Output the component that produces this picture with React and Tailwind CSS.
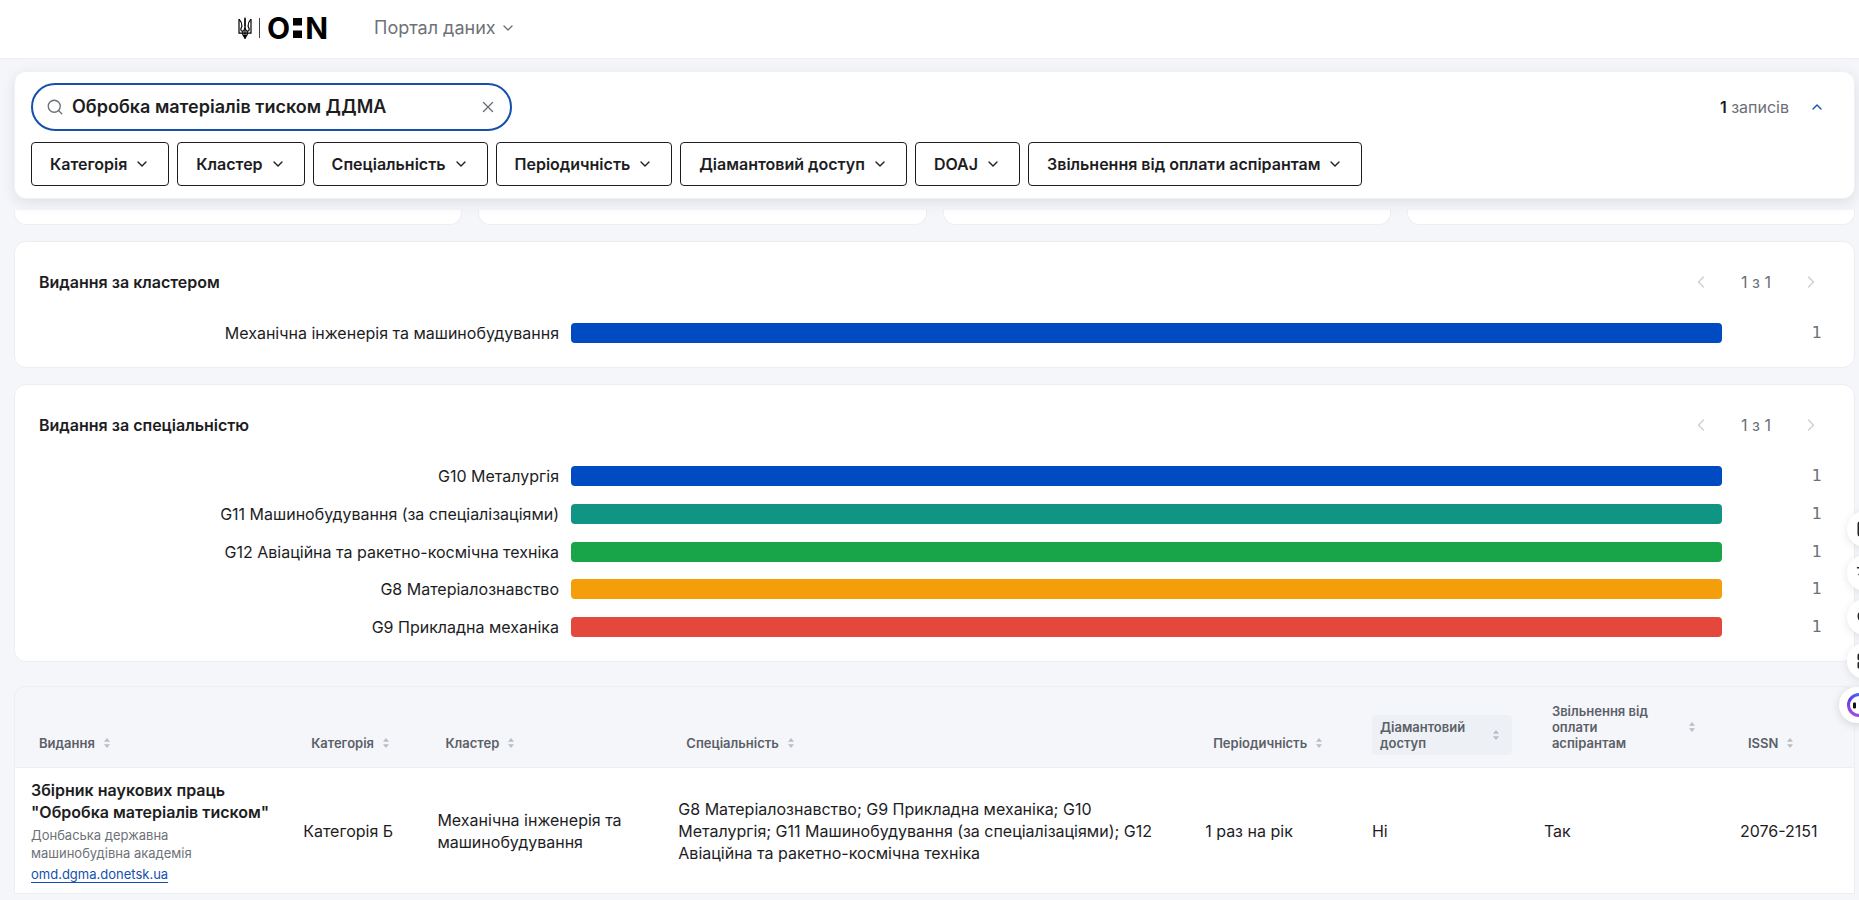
import React, { useState } from "react";
import {
  ChevronDown,
  ChevronLeft,
  ChevronRight,
  ChevronUp,
  Languages,
  LayoutGrid,
  Search,
  Square,
  X,
} from "lucide-react";

const filters = [
  "Категорія",
  "Кластер",
  "Спеціальність",
  "Періодичність",
  "Діамантовий доступ",
  "DOAJ",
  "Звільнення від оплати аспірантам",
];

const clusters = [
  { label: "Механічна інженерія та машинобудування", color: "bg-[#004bc1]", value: 1 },
];

const specialties = [
  { label: "G10 Металургія", color: "bg-[#004bc1]", value: 1 },
  { label: "G11 Машинобудування (за спеціалізаціями)", color: "bg-[#109484]", value: 1 },
  { label: "G12 Авіаційна та ракетно-космічна техніка", color: "bg-[#18a54a]", value: 1 },
  { label: "G8 Матеріалознавство", color: "bg-[#f59e0b]", value: 1 },
  { label: "G9 Прикладна механіка", color: "bg-[#e4483d]", value: 1 },
];

const columns = [
  { lines: ["Видання"], width: "w-[14.8%]" },
  { lines: ["Категорія"], width: "w-[7.3%]" },
  { lines: ["Кластер"], width: "w-[13.1%]" },
  { lines: ["Спеціальність"], width: "w-[28.65%]" },
  { lines: ["Періодичність"], width: "w-[9.07%]" },
  { lines: ["Діамантовий", "доступ"], width: "w-[9.35%]", wide: true, active: true },
  { lines: ["Звільнення від", "оплати", "аспірантам"], width: "w-[10.66%]", wide: true },
  { lines: ["ISSN"], width: "w-[7.07%]" },
];

function Trident() {
  return (
    <svg viewBox="0 0 14 22" className="h-[22px] w-[14px]" fill="none" stroke="#000" strokeWidth="1.2" aria-hidden="true">
      <path d="M1 2.2v14h3.500M13 2.200v14H9.500" />
      <path d="M1 2.200c2 2.100 3 4.300 2.900 6.800-.1 1.500-1 2.100-1.100 3.400 0 1.200.8 1.800 1.900 1.800 1.900-.3 2.100-2.700 2.300-5.200V1.500M13 2.200c-2 2.100-3 4.300-2.900 6.800.1 1.500 1 2.100 1.100 3.400 0 1.200-.8 1.800-1.900 1.800-1.900-.3-2.100-2.700-2.300-5.200" />
      <path d="M7 .5v8.500M4.700 14.200v2.600c0 1.400.9 2.200 2.300 2.200s2.300-.8 2.300-2.200v-2.600M7 12v9M4.500 16.200h5" />
      <path d="M5.800 18.800h2.400L7 21.500z" fill="#000" />
    </svg>
  );
}

function Logo() {
  return (
    <a href="#" aria-label="ОН" className="flex items-center text-black">
      <Trident />
      <span className="mx-[7px] h-5 w-px bg-[#444444]" />
      <span className="flex items-center gap-[3px] text-[30px] leading-[30px] font-bold">
        <span>O</span>
        <svg viewBox="0 0 9 22" className="h-[22px] w-[9px]" aria-hidden="true">
          <rect y="1" width="9" height="7.500" />
          <rect y="13.500" width="9" height="7.500" />
        </svg>
        <span>N</span>
      </span>
    </a>
  );
}

function SortIcon() {
  return (
    <svg viewBox="0 0 16 16" className="size-4 shrink-0" fill="#b9bdc5" aria-hidden="true">
      <path d="M8 3l3 3.800H5zM8 13l3-3.800H5z" />
    </svg>
  );
}

function Pager() {
  return (
    <div className="flex items-center text-base text-[#6b7078]">
      <button type="button" aria-label="Попередня" disabled className="flex size-8 items-center justify-center">
        <ChevronLeft className="size-5 text-[#cdd0d5]" strokeWidth={1.8} />
      </button>
      <span className="w-[78px] text-center">1 з 1</span>
      <button type="button" aria-label="Наступна" disabled className="flex size-8 items-center justify-center">
        <ChevronRight className="size-5 text-[#cdd0d5]" strokeWidth={1.8} />
      </button>
    </div>
  );
}

function ChartCard({ title, rows, chartHeight }) {
  return (
    <section className="rounded-xl border border-[#eceef2] bg-white p-6">
      <div className="flex items-center justify-between pr-[3px]">
        <h2 className="text-base leading-8 font-semibold">{title}</h2>
        <Pager />
      </div>
      <ul className={`mt-[25px] flex flex-col justify-between pr-2 ${chartHeight}`}>
        {rows.map((row) => (
          <li key={row.label} className="flex h-5 items-center gap-3">
            <span className="w-[520px] shrink-0 text-right leading-5">{row.label}</span>
            <span className={`h-5 flex-1 rounded-[4px] ${row.color}`} />
            <span className="w-[88px] shrink-0 text-right font-['DejaVu_Sans',sans-serif] leading-5 text-[#6b7078]">
              {row.value}
            </span>
          </li>
        ))}
      </ul>
    </section>
  );
}

function FloatingTools() {
  const round =
    "-mr-6 flex size-9 items-center rounded-full bg-white pl-[9px] text-[#222222] shadow-[0_2px_10px_rgba(0,0,0,0.1)]";
  return (
    <aside className="fixed top-[511px] right-0 flex flex-col items-end gap-2">
      <button type="button" aria-label="Копіювати" className={round}>
        <Square className="size-[18px] shrink-0" />
      </button>
      <button type="button" aria-label="Перекласти" className={round}>
        <Languages className="size-[18px] shrink-0" />
      </button>
      <button type="button" aria-label="Пошук" className={round}>
        <Search className="size-[18px] shrink-0" />
      </button>
      <button type="button" aria-label="Застосунки" className={round}>
        <LayoutGrid className="size-[18px] shrink-0" fill="currentColor" />
      </button>
      <button
        type="button"
        aria-label="Помічник"
        className="-mr-4 flex size-9 items-center rounded-full bg-white pl-2 shadow-[0_2px_10px_rgba(0,0,0,0.14)]"
      >
        <svg viewBox="0 0 24 24" className="size-6 shrink-0" fill="none" aria-hidden="true">
          <defs>
            <linearGradient id="ring" x1="0" y1="1" x2="0.5" y2="0">
              <stop offset="0" stopColor="#b44ee0" />
              <stop offset="0.6" stopColor="#5b3fe0" />
              <stop offset="1" stopColor="#4a63f0" />
            </linearGradient>
          </defs>
          <circle cx="12" cy="12" r="10.500" stroke="url(#ring)" strokeWidth="3" />
          <rect x="6" y="9.500" width="3" height="6" rx="1" fill="#111" />
          <rect x="14" y="9.500" width="3" height="6" rx="1" fill="#111" />
        </svg>
      </button>
    </aside>
  );
}

export default function App() {
  const [query, setQuery] = useState("Обробка матеріалів тиском ДДМА");

  return (
    <div className="min-h-screen bg-[#f5f6fa] font-['Inter','Liberation_Sans',sans-serif] text-base text-[#1d1d1f]">
      <header className="flex h-[59px] items-center gap-[46px] border-b border-[#eceef2] bg-white pb-[2px] pl-[238px]">
        <Logo />
        <button type="button" className="flex items-center gap-1 text-lg text-[#6e7278]">
          Портал даних
          <ChevronDown className="size-4" />
        </button>
      </header>

      <main className="pt-3 pr-1 pl-[14px]">
        <section className="relative rounded-xl border border-[#f0f1f4] bg-white px-4 pt-[11px] pb-3 shadow-[0_4px_14px_rgba(30,40,70,0.1)]">
          <div className="flex items-center justify-between">
            <div
              role="search"
              className="flex h-12 w-[481px] items-center gap-2 rounded-full border-2 border-[#1550ae] px-[13px]"
            >
              <Search className="size-[18px] shrink-0 text-[#6b7078]" strokeWidth={1.8} />
              <input
                type="text"
                aria-label="Пошук"
                value={query}
                onChange={(e) => setQuery(e.target.value)}
                className="min-w-0 flex-1 bg-transparent text-lg font-semibold outline-none"
              />
              <button type="button" aria-label="Очистити" onClick={() => setQuery("")}>
                <X className="size-[18px] text-[#6b7078]" strokeWidth={1.8} />
              </button>
            </div>
            <div className="flex items-center gap-5 pr-[13px] text-[#6b7078]">
              <p>
                <b className="font-semibold text-[#1d1d1f]">1</b> записів
              </p>
              <button type="button" aria-label="Згорнути" className="text-[#1550ae]">
                <ChevronUp className="size-4" />
              </button>
            </div>
          </div>
          <div className="mt-[11px] flex flex-wrap gap-2">
            {filters.map((name) => (
              <button
                key={name}
                type="button"
                className="flex h-11 items-center gap-[7px] rounded-[4px] border border-[#1d1d1f] px-[18px] font-semibold"
              >
                {name}
                <ChevronDown className="size-4" />
              </button>
            ))}
          </div>
        </section>

        <div className="mt-[11px] grid grid-cols-4 gap-4">
          {[0, 1, 2, 3].map((n) => (
            <div key={n} className="h-[15px] rounded-b-xl border border-t-0 border-[#eceef2] bg-white" />
          ))}
        </div>

        <div className="mt-4 flex flex-col gap-4">
          <ChartCard title="Видання за кластером" rows={clusters} chartHeight="h-5" />
          <ChartCard title="Видання за спеціальністю" rows={specialties} chartHeight="h-[171px]" />
        </div>

        <div className="mt-6 overflow-hidden rounded-t-xl border border-b-0 border-[#eceef2]">
          <table className="w-full table-fixed text-left">
            <thead>
              <tr className="h-20 border-b border-[#eceef2] align-bottom">
                {columns.map((col) => (
                  <th key={col.lines[0]} className={`px-4 py-3 ${col.width}`}>
                    <button
                      type="button"
                      className={`flex items-center gap-1 rounded-[4px] px-2 py-1 text-left text-[13px] leading-4 font-semibold text-[#5b6068] ${col.wide ? "w-full justify-between" : ""} ${col.active ? "bg-[#edf0f5]" : ""}`}
                    >
                      <span>
                        {col.lines.map((line) => (
                          <span key={line} className="block whitespace-nowrap">
                            {line}
                          </span>
                        ))}
                      </span>
                      <SortIcon />
                    </button>
                  </th>
                ))}
              </tr>
            </thead>
            <tbody className="bg-white">
              <tr className="border-b border-[#eceef2] leading-[22px]">
                <td className="px-4 pt-[11px] pb-[10px]">
                  <strong className="block font-semibold whitespace-nowrap">
                    Збірник наукових праць
                    <br />
                    "Обробка матеріалів тиском"
                  </strong>
                  <span className="mt-[3px] block text-[13px] leading-[18px] text-[#6e7278]">
                    Донбаська державна
                    <br />
                    машинобудівна академія
                  </span>
                  <a
                    href="https://omd.dgma.donetsk.ua"
                    className="mt-[3px] block text-[13px] leading-[18px] text-[#1550ae] underline underline-offset-3"
                  >
                    omd.dgma.donetsk.ua
                  </a>
                </td>
                <td className="px-4 whitespace-nowrap">Категорія Б</td>
                <td className="px-4">Механічна інженерія та машинобудування</td>
                <td className="px-4">
                  G8 Матеріалознавство; G9 Прикладна механіка; G10
                  <br />
                  Металургія; G11 Машинобудування (за спеціалізаціями); G12
                  <br />
                  Авіаційна та ракетно-космічна техніка
                </td>
                <td className="px-4 whitespace-nowrap">1 раз на рік</td>
                <td className="px-4">Ні</td>
                <td className="px-4">Так</td>
                <td className="px-4 whitespace-nowrap">2076-2151</td>
              </tr>
            </tbody>
          </table>
        </div>
      </main>

      <FloatingTools />
    </div>
  );
}
